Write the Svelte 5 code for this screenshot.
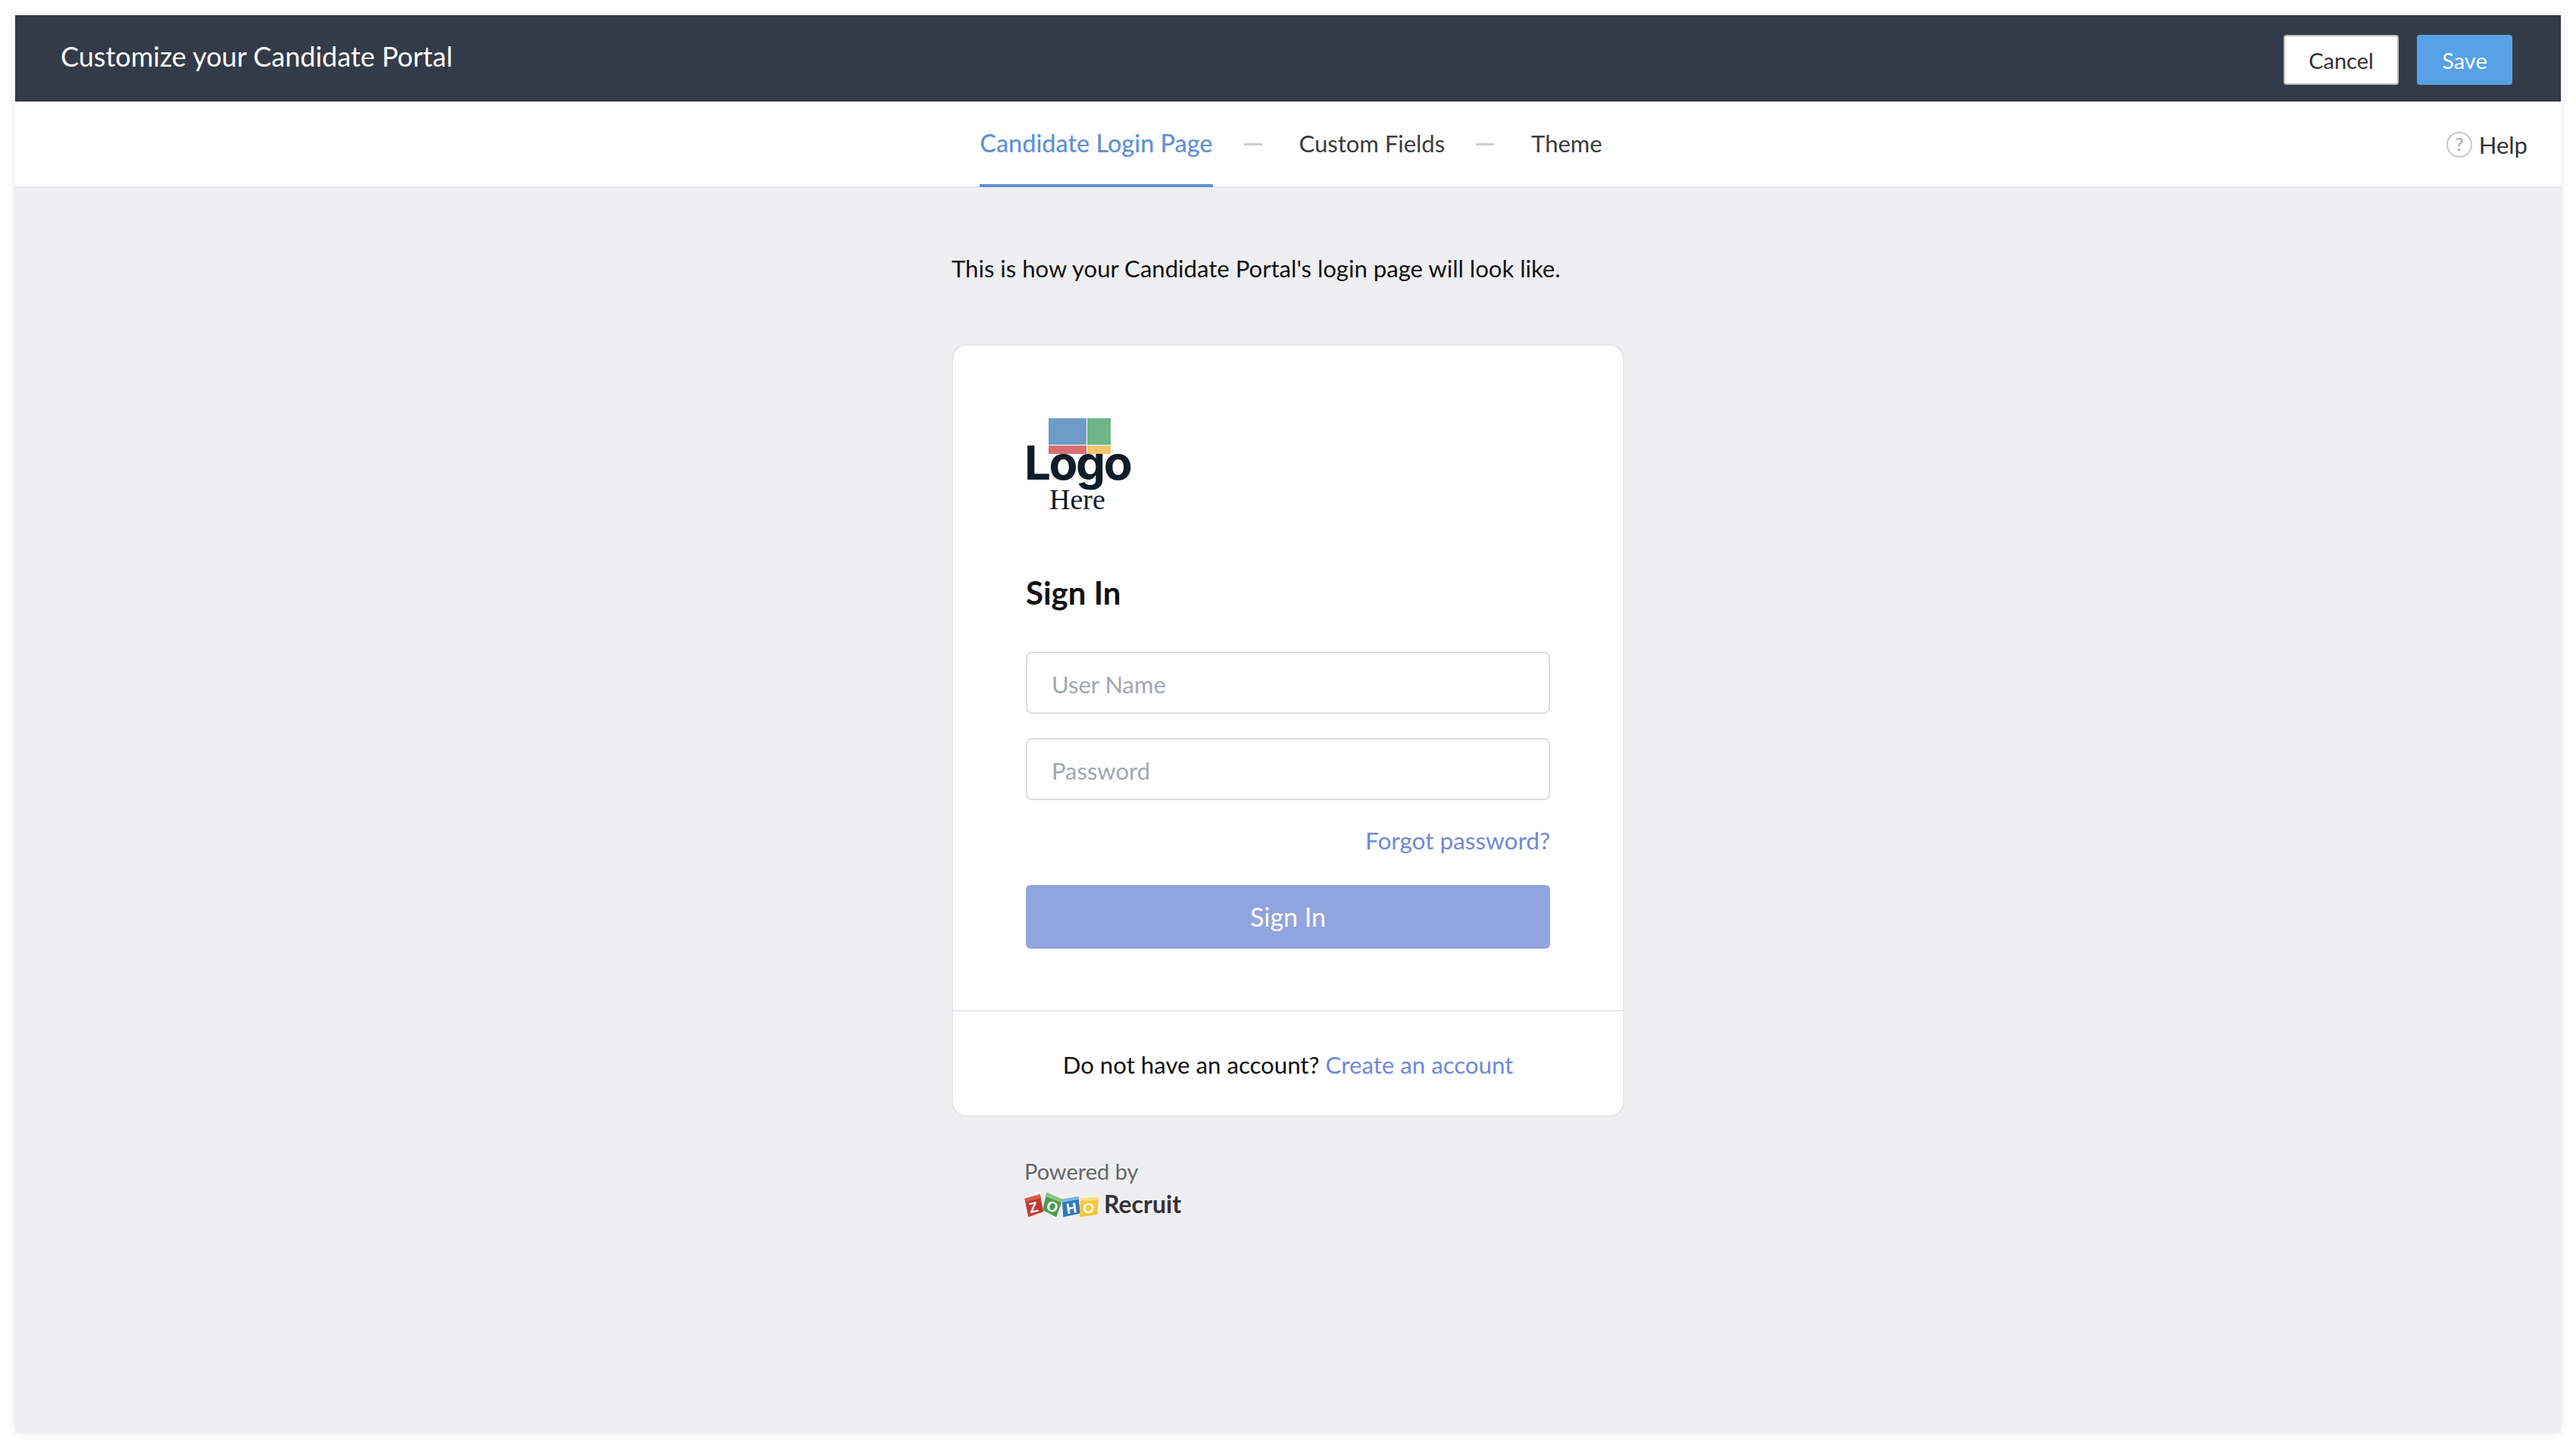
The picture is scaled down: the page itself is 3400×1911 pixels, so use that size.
<script>
	const steps = [
		{ label: 'Candidate Login Page', active: true },
		{ label: 'Custom Fields', active: false },
		{ label: 'Theme', active: false }
	];
</script>

<div class="window">
	<header class="topbar">
		<h1>Customize your Candidate Portal</h1>
		<div class="actions">
			<button class="cancel">Cancel</button>
			<button class="save">Save</button>
		</div>
	</header>

	<nav class="steps">
		{#each steps as step, i}
			{#if i > 0}<span class="dash"></span>{/if}
			<span class="step" class:active={step.active}>{step.label}</span>
		{/each}
		<div class="help">
			<svg width="34" height="34" viewBox="0 0 34 34">
				<circle cx="17" cy="17" r="16" fill="none" stroke="#c9c9c9" stroke-width="2" />
				<text x="17" y="25" text-anchor="middle" class="help-mark">?</text>
			</svg>
			<span>Help</span>
		</div>
	</nav>

	<main class="content">
		<div class="column">
			<p class="intro">This is how your Candidate Portal's login page will look like.</p>

			<section class="card">
				<div class="card-body">
					<svg class="logo" width="140" height="126" viewBox="0 0 140 126">
						<rect x="30" y="0" width="50" height="35" fill="#6f9bc8" />
						<rect x="81" y="0" width="31" height="35" fill="#6fb587" />
						<rect x="30" y="36" width="50" height="11" fill="#d9706f" />
						<rect x="81" y="36" width="31" height="11" fill="#f1c66d" />
						<text x="-2" y="81" class="logo-word">Logo</text>
						<text x="31" y="120" class="logo-here">Here</text>
					</svg>

					<h2>Sign In</h2>

					<div class="field">User Name</div>
					<div class="field">Password</div>

					<div class="forgot"><span class="link">Forgot password?</span></div>

					<button class="signin">Sign In</button>
				</div>

				<div class="card-foot">
					Do not have an account? <span class="link">Create an account</span>
				</div>
			</section>

			<div class="powered">
				<div class="powered-label">Powered by</div>
				<div class="brand">
					<svg width="100" height="36" viewBox="0 0 100 36">
						<polygon points="0.3,11 20.7,5.3 25.3,28 5.3,35.3" fill="#c23a32" />
						<polygon points="0.3,11 20.7,5.3 22,10 2,15" fill="#dc5a4c" />
						<polygon points="29.7,2.7 50.3,12 42.3,35.3 24,26" fill="#4a9a4c" />
						<polygon points="29.7,2.7 50.3,12 48.5,16 27.5,8" fill="#8cc68a" />
						<polygon points="49.7,12 71.3,8 74,30.3 51.3,35.3" fill="#2f78b8" />
						<polygon points="49.7,12 71.3,8 71.8,12 50,16" fill="#7db8e6" />
						<polygon points="74,10.3 98,9.3 96.3,32 73,35.3" fill="#f5c73c" />
						<polygon points="74,10.3 98,9.3 97.6,13 74,14" fill="#fadf7e" />
						<text x="12" y="29" class="cube" transform="rotate(-14 12 22)">Z</text>
						<text x="37" y="28" class="cube" transform="rotate(24 37 21)">O</text>
						<text x="62" y="30" class="cube" transform="rotate(-8 62 23)">H</text>
						<text x="85" y="30" class="cube">O</text>
					</svg>
					<span>Recruit</span>
				</div>
			</div>
		</div>
	</main>
</div>

<style>
	:global(body) {
		background: #fff;
		font-family: 'Lato', 'Open Sans', sans-serif;
	}
	.window {
		box-sizing: border-box;
		width: 3360px;
		height: 1871px;
		margin: 20px;
		background: #efeff1;
		box-shadow: 0 0 12px rgba(40, 50, 70, 0.12);
		border-radius: 0 0 4px 4px;
		display: flex;
		flex-direction: column;
	}
	.topbar {
		height: 114px;
		background: #343b48;
		display: flex;
		align-items: center;
		justify-content: space-between;
		padding: 0 64px 0 60px;
	}
	h1 {
		margin: 0 0 6px;
		font-size: 36px;
		font-weight: 400;
		color: #fff;
	}
	.actions {
		display: flex;
		gap: 24px;
		padding-top: 4px;
	}
	button {
		font-family: inherit;
		cursor: pointer;
	}
	.cancel,
	.save {
		height: 66px;
		font-size: 29px;
		border-radius: 4px;
	}
	.cancel {
		width: 152px;
		background: #fff;
		color: #333;
		border: 2px solid #bcbcbc;
	}
	.save {
		width: 126px;
		background: #57a1e5;
		color: #fff;
		border: none;
	}
	.steps {
		position: relative;
		box-sizing: border-box;
		height: 114px;
		padding-left: 8px;
		background: #fff;
		border-bottom: 2px solid #e4e5e8;
		display: flex;
		align-items: center;
		justify-content: center;
		font-size: 31px;
		color: #3c3c3c;
	}
	.step {
		height: 112px;
		line-height: 110px;
		box-sizing: border-box;
	}
	.step.active {
		color: #5f91d3;
		font-size: 32.4px;
		font-weight: 500;
		line-height: 112px;
		height: 114px;
		border-bottom: 4px solid #5f91d3;
	}
	.dash {
		width: 24px;
		height: 3px;
		background: #cfcfcf;
		margin: 0 49px 0 41px;
	}
	.help {
		position: absolute;
		right: 44px;
		top: 38px;
		display: flex;
		align-items: center;
		gap: 9px;
		color: #333;
	}
	.help-mark {
		font-size: 24px;
		fill: #a5a5a5;
		font-family: 'Lato', sans-serif;
	}
	.content {
		flex: 1;
	}
	.column {
		width: 888px;
		margin: 0 auto;
	}
	.intro {
		margin: 86px 0 0;
		font-size: 31.1px;
		line-height: 40px;
		color: #111;
	}
	.card {
		margin-top: 80px;
		background: #fff;
		border: 2px solid #e6e7ea;
		border-radius: 20px;
	}
	.card-body {
		padding: 96px 96px 0;
		border-bottom: 2px solid #e9eaed;
		height: 879px;
		box-sizing: border-box;
	}
	.logo {
		display: block;
		overflow: visible;
	}
	.logo-word {
		font-family: 'Inter', sans-serif;
		font-weight: 700;
		font-size: 62px;
		letter-spacing: -2.5px;
		fill: #101c28;
	}
	.logo-here {
		font-family: 'Liberation Serif', serif;
		font-size: 38px;
		fill: #101c28;
	}
	h2 {
		margin: 76px 0 0;
		font-size: 42px;
		line-height: 56px;
		font-weight: 700;
		color: #111;
	}
	.field {
		box-sizing: border-box;
		height: 82px;
		margin-top: 32px;
		padding: 0 32px;
		border: 2px solid #dcdde2;
		border-radius: 8px;
		font-size: 31px;
		line-height: 82px;
		color: #a3a7b1;
	}
	h2 + .field {
		margin-top: 50px;
	}
	.forgot {
		margin-top: 35px;
		text-align: right;
		font-size: 31.5px;
		line-height: 36px;
	}
	.link {
		color: #7088d8;
	}
	.signin {
		display: block;
		width: 100%;
		height: 84px;
		margin-top: 41px;
		padding-bottom: 3px;
		background: #92a4dd;
		color: #fff;
		border: none;
		border-radius: 6px;
		font-size: 34px;
	}
	.card-foot {
		box-sizing: border-box;
		height: 137px;
		padding-top: 6px;
		text-align: center;
		font-size: 31.2px;
		line-height: 129px;
		color: #111;
	}
	.powered {
		padding: 54px 0 0 96px;
	}
	.powered-label {
		font-size: 29px;
		line-height: 36px;
		color: #666;
	}
	.brand {
		display: flex;
		align-items: center;
		gap: 5px;
		margin-top: 5px;
		font-size: 32px;
		font-weight: 700;
		color: #333;
	}
	.brand svg {
		overflow: visible;
	}
	.cube {
		font-family: 'Liberation Sans', sans-serif;
		font-weight: 700;
		font-size: 19px;
		fill: #fff;
		text-anchor: middle;
	}
</style>
